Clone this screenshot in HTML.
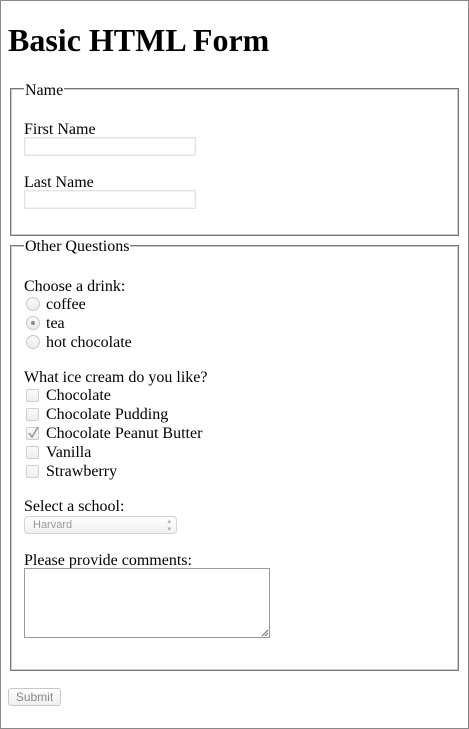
<!DOCTYPE html>
<html><head><style>
html,body{margin:0;padding:0;}
body{width:469px;height:729px;position:relative;background:#fff;overflow:hidden;font-family:"Liberation Serif",serif;}
.frame{position:absolute;left:0;top:0;width:467px;height:727px;border:1px solid #888;}
.t{position:absolute;font:16px/19px "Liberation Serif",serif;color:#000;white-space:nowrap;margin-top:1px;}
.fs{position:absolute;border:1px solid #777;box-shadow:inset 0 0 0 1px #ccc;}
.lg{position:absolute;background:#fff;padding:0 1px;font:16px/19px "Liberation Serif",serif;margin-top:1px;}
.in{position:absolute;border:1px solid #e3e3e3;box-shadow:inset 0 0 0 1px #f3f3f3;background:#fff;}
.r{position:absolute;width:12px;height:12px;border-radius:50%;border:1px solid #c8c8c8;background:linear-gradient(#fafafa,#ececec);}
.c{position:absolute;width:11px;height:11px;border-radius:2px;border:1px solid #cfcfcf;background:linear-gradient(#fafafa,#eee);}
</style></head><body>
<div class="frame"></div>
<div style="position:absolute;left:8px;top:24px;font:bold 32px/32px 'Liberation Serif',serif;">Basic HTML Form</div>

<div class="fs" style="left:10px;top:88px;width:447px;height:146px;"></div>
<div class="lg" style="left:24px;top:80px;">Name</div>
<div class="t" style="left:24px;top:119px;">First Name</div>
<div class="in" style="left:24px;top:137px;width:170px;height:17px;"></div>
<div class="t" style="left:24px;top:172px;">Last Name</div>
<div class="in" style="left:24px;top:190px;width:170px;height:17px;"></div>

<div class="fs" style="left:10px;top:245px;width:447px;height:424px;"></div>
<div class="lg" style="left:24px;top:236px;">Other Questions</div>
<div class="t" style="left:24px;top:276px;">Choose a drink:</div>
<div class="r" style="left:26px;top:297px;"></div><div class="t" style="left:46px;top:294px;">coffee</div>
<div class="r" style="left:26px;top:316px;"></div><div style="position:absolute;left:31px;top:321px;width:4px;height:4px;border-radius:50%;background:#888;"></div><div class="t" style="left:46px;top:313px;">tea</div>
<div class="r" style="left:26px;top:335px;"></div><div class="t" style="left:46px;top:332px;">hot chocolate</div>

<div class="t" style="left:24px;top:367px;">What ice cream do you like?</div>
<div class="c" style="left:26px;top:389px;"></div><div class="t" style="left:46px;top:385px;">Chocolate</div>
<div class="c" style="left:26px;top:408px;"></div><div class="t" style="left:46px;top:404px;">Chocolate Pudding</div>
<div class="c" style="left:26px;top:427px;"></div>
<svg style="position:absolute;left:26px;top:424px" width="14" height="16"><path d="M3 9 L6 13 L12 3" stroke="#999" stroke-width="1.6" fill="none"/></svg>
<div class="t" style="left:46px;top:423px;">Chocolate Peanut Butter</div>
<div class="c" style="left:26px;top:446px;"></div><div class="t" style="left:46px;top:442px;">Vanilla</div>
<div class="c" style="left:26px;top:465px;"></div><div class="t" style="left:46px;top:461px;">Strawberry</div>

<div class="t" style="left:24px;top:496px;">Select a school:</div>
<div style="position:absolute;left:24px;top:516px;width:151px;height:16px;border:1px solid #d3d3d3;border-radius:4px;background:linear-gradient(#fff,#f0f0f0);font:11px/16px 'Liberation Sans',sans-serif;color:#999;"><span style="position:absolute;left:8px;">Harvard</span><span style="position:absolute;right:5px;font-size:7px;line-height:8px;top:1px;color:#aaa;">▴<br>▾</span></div>

<div class="t" style="left:24px;top:550px;">Please provide comments:</div>
<div style="position:absolute;left:24px;top:568px;width:244px;height:68px;border:1px solid #999;"></div>
<svg style="position:absolute;left:261px;top:629px" width="8" height="8"><path d="M1 7 L7 1 M4 7 L7 4" stroke="#666" stroke-width="1"/></svg>

<div style="position:absolute;left:8px;top:688px;width:51px;height:16px;border:1px solid #c8c8c8;border-radius:3px;background:linear-gradient(#fff,#efefef);font:12px/16px 'Liberation Sans',sans-serif;color:#888;text-align:center;">Submit</div>
</body></html>
